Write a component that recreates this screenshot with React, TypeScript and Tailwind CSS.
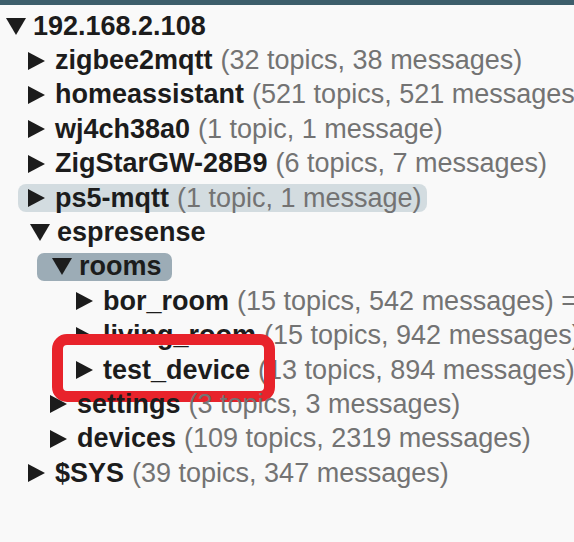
import React from 'react';

type Node = {
  name: string;
  level: number;
  open?: boolean;
  info?: string;
  hl?: 'soft' | 'strong';
  marked?: boolean;
};

const rows: Node[] = [
  { name: '192.168.2.108', level: 0, open: true },
  { name: 'zigbee2mqtt', level: 1, info: '(32 topics, 38 messages)' },
  { name: 'homeassistant', level: 1, info: '(521 topics, 521 messages)' },
  { name: 'wj4ch38a0', level: 1, info: '(1 topic, 1 message)' },
  { name: 'ZigStarGW-28B9', level: 1, info: '(6 topics, 7 messages)' },
  { name: 'ps5-mqtt', level: 1, info: '(1 topic, 1 message)', hl: 'soft' },
  { name: 'espresense', level: 1, open: true },
  { name: 'rooms', level: 2, open: true, hl: 'strong' },
  { name: 'bor_room', level: 3, info: '(15 topics, 542 messages) = 0' },
  { name: 'living_room', level: 3, info: '(15 topics, 942 messages)' },
  { name: 'test_device', level: 3, info: '(13 topics, 894 messages)', marked: true },
  { name: 'settings', level: 2, info: '(3 topics, 3 messages)' },
  { name: 'devices', level: 2, info: '(109 topics, 2319 messages)' },
  { name: '$SYS', level: 1, info: '(39 topics, 347 messages)' },
];

const indent = ['pl-[4px]', 'pl-[28px]', 'pl-[50px]', 'pl-[76px]'];

function Arrow({ open }: { open?: boolean }) {
  if (open) {
    return (
      <svg width="20" height="17" viewBox="0 0 20 17" className="shrink-0 ml-[2px] mr-[7px]">
        <polygon points="0,0 20,0 10,17" fill="#1c1c1c" />
      </svg>
    );
  }
  return (
    <svg width="17" height="18" viewBox="0 0 17 18" className="shrink-0 mr-[10px]">
      <polygon points="0,0 17,9 0,18" fill="#1c1c1c" />
    </svg>
  );
}

function Row({ n }: { n: Node }) {
  const box =
    n.hl === 'soft'
      ? 'bg-[#d3dce0] rounded-[8px] -ml-[10px] pl-[10px] pr-[5px]'
      : n.hl === 'strong'
        ? 'bg-[#9cacb6] rounded-[7px] -ml-[13px] pl-[13px] pr-[10px]'
        : '';
  return (
    <div className={`relative h-[34.4px] flex items-center ${indent[n.level]}`}>
      <div className={`flex items-center h-[28px] ${box}`}>
        <Arrow open={n.open} />
        <span className="font-bold text-[#1c1c1c]">{n.name}</span>
        {n.info && <span className="ml-[8px] text-[#737373]">{n.info}</span>}
      </div>
      {n.marked && (
        <div className="absolute left-[52px] top-[-19px] w-[223px] h-[68px] border-[11px] border-[#e8232b] rounded-[15px]" />
      )}
    </div>
  );
}

export default function App() {
  return (
    <div className="w-[574px] h-[542px] overflow-hidden bg-[#f9f9f9] font-['Liberation_Sans',Arial,sans-serif] text-[27px] leading-none whitespace-nowrap">
      <div className="h-[5px] bg-[#3d5e6b]" />
      <div className="pt-[4px]">
        {rows.map((n) => (
          <Row key={n.name} n={n} />
        ))}
      </div>
    </div>
  );
}
